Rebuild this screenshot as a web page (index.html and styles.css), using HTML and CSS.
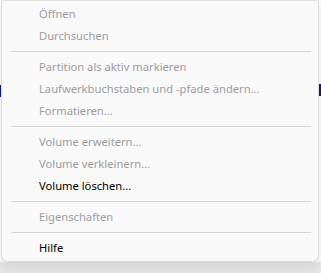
FILE: index.html
```html
<!DOCTYPE html>
<html lang="de">
<head>
    <meta charset="UTF-8">
    <title>Kontextmenü</title>
    <link rel="stylesheet" href="styles.css">
</head>
<body>
    <div class="desk">
        <span class="mark mark-l"></span>
        <span class="mark mark-r"></span>
        <ul class="menu">
            <li class="off">Öffnen</li>
            <li class="off">Durchsuchen</li>
            <li class="sep"></li>
            <li class="off">Partition als aktiv markieren</li>
            <li class="off">Laufwerkbuchstaben und -pfade ändern...</li>
            <li class="off">Formatieren...</li>
            <li class="sep"></li>
            <li class="off">Volume erweitern...</li>
            <li class="off">Volume verkleinern...</li>
            <li>Volume löschen...</li>
            <li class="sep"></li>
            <li class="off">Eigenschaften</li>
            <li class="sep"></li>
            <li>Hilfe</li>
        </ul>
    </div>
</body>
</html>
```

FILE: styles.css
```css
*{
    margin:0;
    padding:0;
    list-style:none;
    box-sizing:border-box;
}
body{
    width:321px;
    height:273px;
    overflow:hidden;
    background-color:#e9e9e9;
    font-family:"Noto Sans", "Open Sans", sans-serif;
}
.desk{
    position:relative;
    height:273px;
    padding-left:1px;
    background:linear-gradient(#fafafa, #fafafa 262px, #e6e6e6 262px);
}
/* Reste vom Fenster dahinter */
.mark{
    position:absolute;
    width:3px;
    height:12px;
    background-color:#0a1a8c;
}
.mark-l{
    left:0;
    top:85px;
    width:1px;
}
.mark-r{
    right:0;
    top:84px;
}
.menu{
    position:relative;
    width:318px;
    padding:2px 0 2px;
    background-color:#f9f9f9;
    border:1px solid #dcdcdc;
    border-top-color:#e4e4e4;
    border-radius:0 0 7px 7px;
    box-shadow:0 6px 10px rgba(0,0,0,0.08);
}
.menu li{
    height:22px;
    line-height:22px;
    padding-left:37px;
    font-size:11.2px;
    color:#000;
    white-space:nowrap;
}
.menu li.off{
    color:#a09c9e;
}
.menu li.sep{
    height:9px;
    padding:4px 0 0;
    margin:0 7px 0 9px;
}
.menu li.sep::before{
    content:"";
    display:block;
    height:1px;
    background-color:#d5d5d5;
}
```
